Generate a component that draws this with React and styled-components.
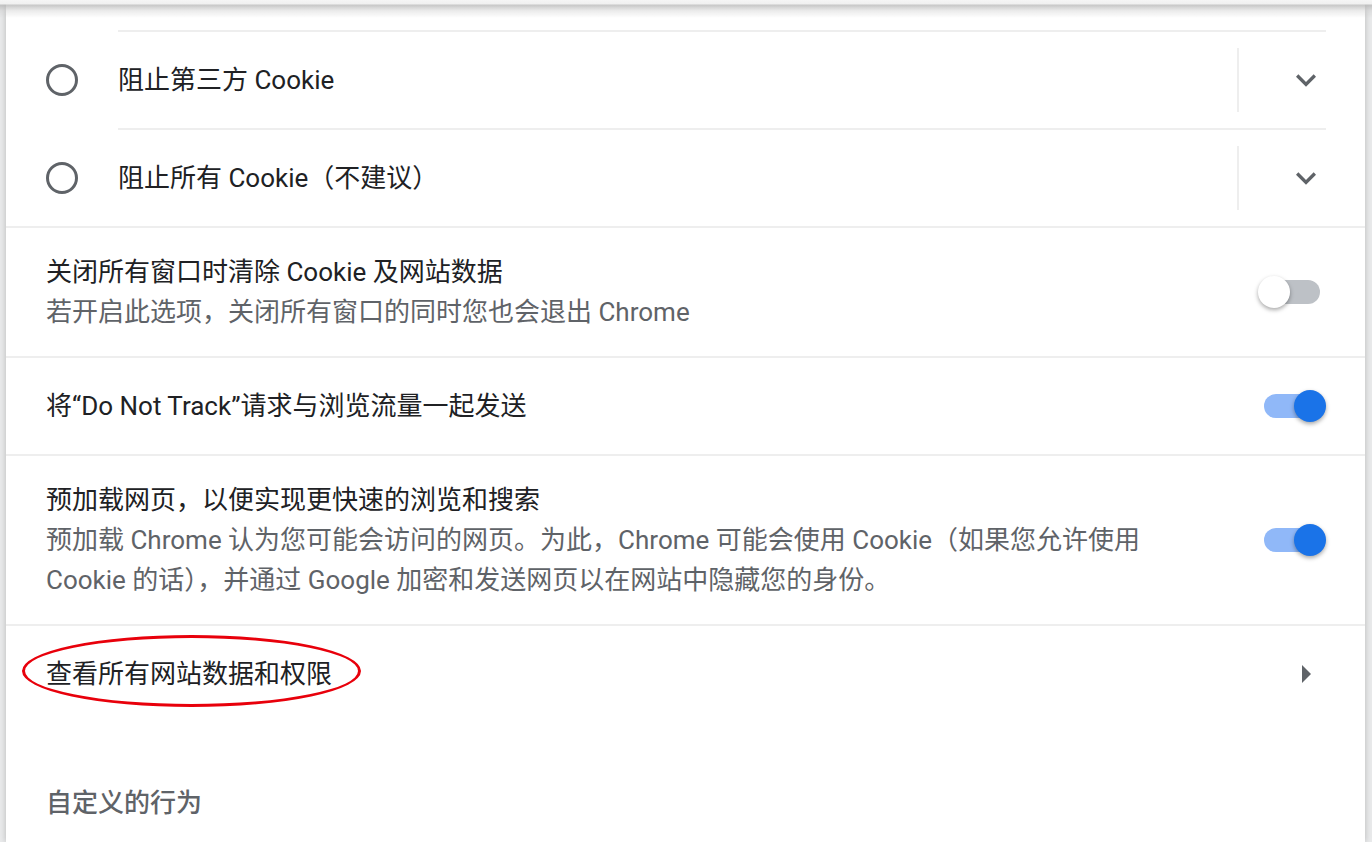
import React from "react";
import styled, { createGlobalStyle } from "styled-components";

const GlobalStyle = createGlobalStyle`
    html, body {
        margin: 0;
        padding: 0;
        background: #e9eaeb;
    }
    body {
        font-family: Roboto, "Noto Sans CJK SC", sans-serif;
        -webkit-font-smoothing: antialiased;
    }
`;

export default function App() {
    return (
        <>
            <GlobalStyle />
            <Page>
                <ToolbarShadow />
                <Card>
                    <TopSpacer />
                    <RadioRow>
                        <RadioCell>
                            <Radio />
                        </RadioCell>
                        <RadioBody>
                            <Label>阻止第三方 Cookie</Label>
                            <Divider />
                            <ExpandButton>
                                <Chevron />
                            </ExpandButton>
                        </RadioBody>
                    </RadioRow>
                    <RadioRow>
                        <RadioCell>
                            <Radio />
                        </RadioCell>
                        <RadioBody>
                            <Label>阻止所有 Cookie（不建议）</Label>
                            <Divider />
                            <ExpandButton>
                                <Chevron />
                            </ExpandButton>
                        </RadioBody>
                    </RadioRow>

                    <SettingRow>
                        <TextBlock>
                            <Label>关闭所有窗口时清除 Cookie 及网站数据</Label>
                            <Secondary>若开启此选项，关闭所有窗口的同时您也会退出 Chrome</Secondary>
                        </TextBlock>
                        <Toggle $on={false} />
                    </SettingRow>

                    <SettingRow>
                        <TextBlock>
                            <Label>将“Do Not Track”请求与浏览流量一起发送</Label>
                        </TextBlock>
                        <Toggle $on />
                    </SettingRow>

                    <SettingRow>
                        <TextBlock>
                            <Label>预加载网页，以便实现更快速的浏览和搜索</Label>
                            <Secondary>
                                预加载 Chrome 认为您可能会访问的网页。为此，Chrome 可能会使用 Cookie（如果您允许使用 Cookie 的话），并通过 Google 加密和发送网页以在网站中隐藏您的身份。
                            </Secondary>
                        </TextBlock>
                        <Toggle $on />
                    </SettingRow>

                    <SettingRow>
                        <Mark />
                        <TextBlock>
                            <Label>查看所有网站数据和权限</Label>
                        </TextBlock>
                        <Arrow />
                    </SettingRow>

                    <SectionHeader>自定义的行为</SectionHeader>
                </Card>
            </Page>
        </>
    );
}

function Radio() {
    return <RadioCircle />;
}

function Chevron() {
    return (
        <svg width="40" height="40" viewBox="0 0 24 24">
            <path
                fill="#5f6368"
                d="M7.41 8.59 12 13.17l4.59-4.58L18 10l-6 6-6-6 1.41-1.41z"
            />
        </svg>
    );
}

function Toggle({ $on }) {
    return (
        <ToggleWrap>
            <ToggleBar $on={$on} />
            <ToggleKnob $on={$on} />
        </ToggleWrap>
    );
}

const Page = styled.div`
    display: flex;
    min-height: 842px;
    padding: 0 7px 0 6px;
    box-sizing: border-box;
`;

const ToolbarShadow = styled.div`
    position: fixed;
    top: 0;
    left: 0;
    right: 0;
    height: 18px;
    z-index: 5;
    background: linear-gradient(
        to bottom,
        rgba(245, 245, 245, 1) 0,
        rgba(240, 240, 240, 1) 4px,
        rgba(180, 180, 180, 0.75) 5px,
        rgba(200, 200, 200, 0.35) 11px,
        rgba(255, 255, 255, 0) 18px
    );
`;

const Card = styled.div`
    flex: 1;
    background: #fff;
    box-shadow: 0 0 6px rgba(0, 0, 0, 0.22);
    display: flex;
    flex-direction: column;
    color: #202124;
    font-size: 26px;
    line-height: 40px;
`;

const TopSpacer = styled.div`
    height: 30px;
`;

const RadioRow = styled.div`
    display: flex;
    align-items: stretch;
`;

const RadioCell = styled.div`
    width: 112px;
    padding-left: 40px;
    box-sizing: border-box;
    display: flex;
    align-items: center;
    padding-top: 2px;
`;

const RadioCircle = styled.div`
    width: 32px;
    height: 32px;
    border-radius: 50%;
    border: 3.5px solid #5f6368;
    box-sizing: border-box;
`;

const RadioBody = styled.div`
    flex: 1;
    display: flex;
    align-items: center;
    min-height: 98px;
    box-sizing: border-box;
    border-top: 2px solid #eeeeee;
    margin-right: 39px;
`;

const Label = styled.div`
    flex: 1;
    color: #202124;
`;

const Divider = styled.div`
    width: 2px;
    height: 64px;
    background: #eeeeee;
`;

const ExpandButton = styled.div`
    width: 40px;
    height: 40px;
    margin-left: 47px;
    display: flex;
    align-items: center;
    justify-content: center;
`;

const SettingRow = styled.div`
    position: relative;
    display: flex;
    align-items: center;
    min-height: 98px;
    box-sizing: border-box;
    padding: 24px 39px 24px 40px;
    border-top: 2px solid #eeeeee;
`;

const TextBlock = styled.div`
    flex: 1;
    display: flex;
    flex-direction: column;
    padding-right: 100px;
`;

const Secondary = styled.div`
    color: #5f6368;
`;

const ToggleWrap = styled.div`
    position: relative;
    width: 68px;
    height: 32px;
    flex-shrink: 0;
    display: flex;
    align-items: center;
    justify-content: flex-end;
`;

const ToggleBar = styled.div`
    width: 56px;
    height: 24px;
    border-radius: 12px;
    margin-right: 6px;
    background: ${(p) => (p.$on ? "#8ab4f8" : "#bdc1c6")};
    opacity: ${(p) => (p.$on ? 0.95 : 1)};
`;

const ToggleKnob = styled.div`
    position: absolute;
    top: 0;
    width: 32px;
    height: 32px;
    border-radius: 50%;
    left: ${(p) => (p.$on ? "36px" : "0")};
    background: ${(p) => (p.$on ? "#1a73e8" : "#ffffff")};
    box-shadow: 0 2px 4px rgba(0, 0, 0, 0.35);
`;

const Arrow = styled.div`
    width: 0;
    height: 0;
    margin-right: 15px;
    border-top: 9px solid transparent;
    border-bottom: 9px solid transparent;
    border-left: 9px solid #5f6368;
`;

const Mark = styled.div`
    position: absolute;
    left: 16px;
    top: 9px;
    width: 339px;
    height: 72px;
    border: 3.5px solid #e8000b;
    border-radius: 50%;
    box-sizing: border-box;
    pointer-events: none;
`;

const SectionHeader = styled.div`
    margin-top: 61px;
    padding-left: 40px;
    color: #5f6368;
    font-weight: 500;
`;
